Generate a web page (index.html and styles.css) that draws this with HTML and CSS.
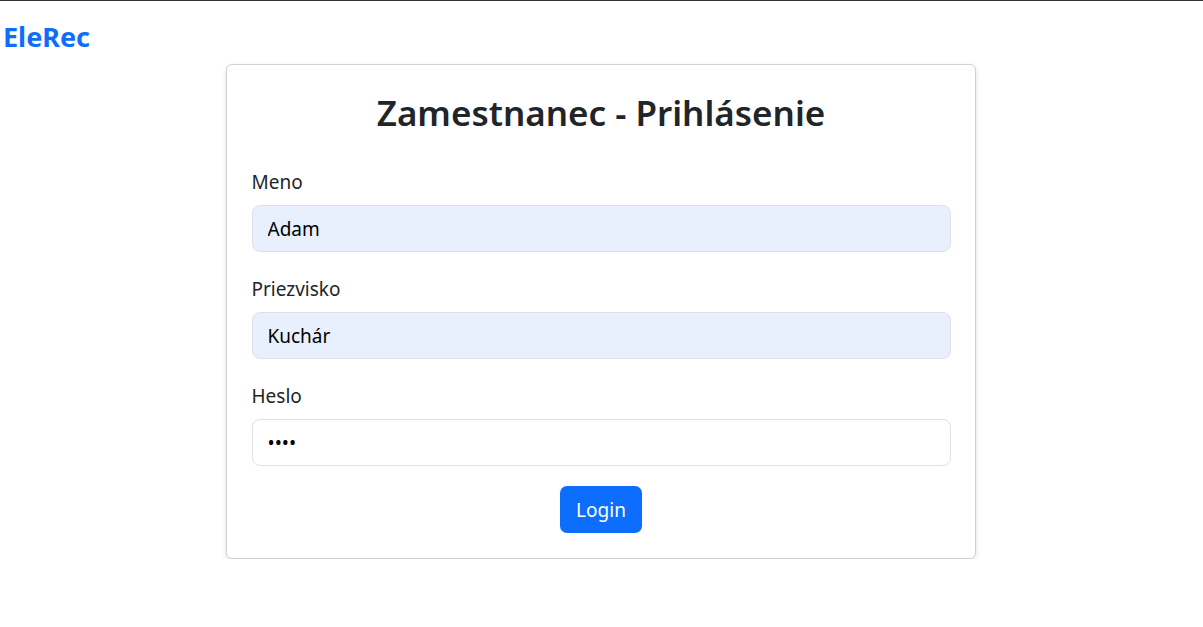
FILE: index.html
```html
<!DOCTYPE html>
<html lang="sk">
<head>
<meta charset="utf-8">
<title>EleRec</title>
<link rel="stylesheet" href="styles.css">
</head>
<body>
<div class="topline"></div>
<nav class="navbar"><a class="brand" href="#">EleRec</a></nav>
<main class="wrap">
  <form class="card">
    <h1 class="title">Zamestnanec - Prihlásenie</h1>
    <div class="group">
      <label class="label" for="meno">Meno</label>
      <input class="input filled" id="meno" type="text" value="Adam">
    </div>
    <div class="group">
      <label class="label" for="priez">Priezvisko</label>
      <input class="input filled" id="priez" type="text" value="Kuchár">
    </div>
    <div class="group group-last">
      <label class="label" for="heslo">Heslo</label>
      <input class="input" id="heslo" type="password" value="1234">
    </div>
    <div class="actions"><button class="btn" type="button">Login</button></div>
  </form>
</main>
</body>
</html>
```
FILE: styles.css
```css
* { box-sizing: border-box; }
html, body { margin: 0; padding: 0; background: #fff; }
body { font-family: "Noto Sans", "Open Sans", sans-serif; color: #212529; }
.topline { height: 1px; background: #333; }
.navbar { height: 63px; display: flex; align-items: center; padding: 0 3px; }
.brand { color: #0d6efd; font-weight: 700; font-size: 27px; text-decoration: none; line-height: 36px; margin-top: 9px; }
.wrap { display: flex; justify-content: center; padding-right: 2px; }
.card { width: 750px; border: 1px solid rgba(0,0,0,.18); border-radius: 6px; box-shadow: 0 2px 5px rgba(0,0,0,.12); padding: 24px 24px 25px 25px; display: flex; flex-direction: column; }
.title { margin: 0 0 30px; font-size: 35px; font-weight: 600; line-height: 48px; text-align: center; }
.group { display: flex; flex-direction: column; margin-bottom: 22px; }
.group-last { margin-bottom: 20px; }
.label { font-size: 19px; line-height: 30px; margin-bottom: 8px; }
.input { height: 47px; border: 1px solid #dee2e6; border-radius: 8px; padding: 0 15px; font: inherit; font-size: 19px; color: #000; background: #fff; outline: none; }
.input.filled { background: #e8f0fe; }
.actions { display: flex; justify-content: center; }
.btn { height: 47px; width: 82px; border: none; border-radius: 7px; background: #0d6efd; color: #fff; font: inherit; font-size: 19px; cursor: pointer; }
```
